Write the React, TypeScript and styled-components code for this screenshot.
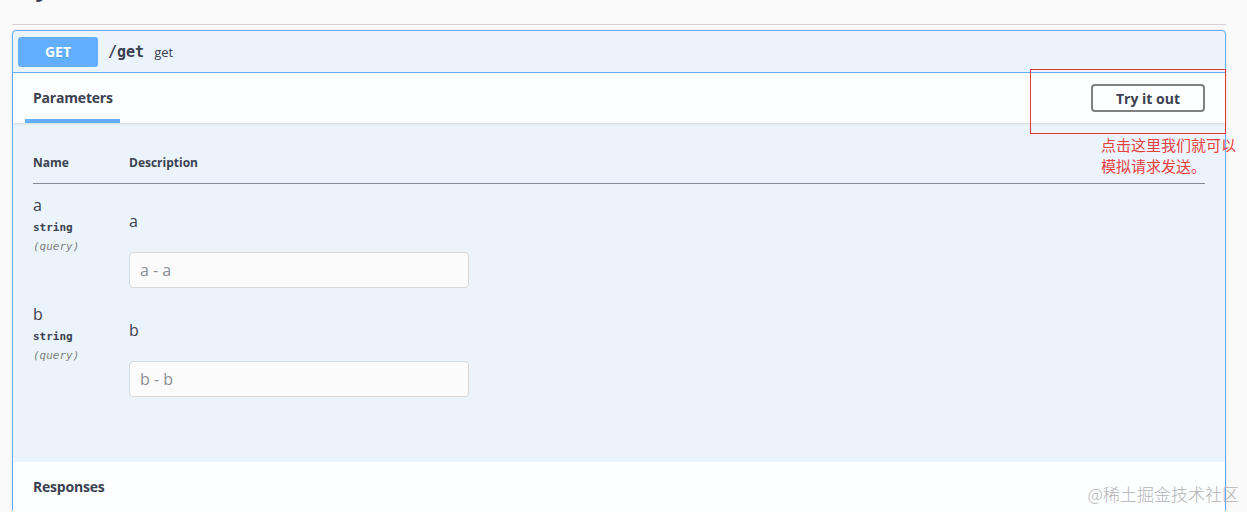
import React from "react";
import styled, { createGlobalStyle } from "styled-components";

const GlobalStyle = createGlobalStyle`
  html, body {
    margin: 0;
    padding: 0;
    background: #fafafa;
  }
  body {
    font-family: "Open Sans", "Noto Sans", "Noto Sans CJK SC", sans-serif;
    color: #3b4151;
  }
  * {
    box-sizing: border-box;
  }
`;

const Page = styled.div`
  position: relative;
  width: 1247px;
  height: 512px;
  overflow: hidden;
  padding: 0 21px 0 12px;
`;

// the tag heading is scrolled mostly out of view, only its descenders show
const TagHeader = styled.div`
  height: 25px;
  overflow: hidden;
  border-bottom: 1px solid #d9cdd6;
`;

const TagRow = styled.div`
  display: flex;
  align-items: baseline;
  gap: 16px;
  margin-top: -27px;
`;

const TagTitle = styled.h3`
  margin: 0;
  font-size: 24px;
  line-height: 28px;
  font-weight: 700;
  color: #3b4151;
`;

const TagDesc = styled.small`
  font-size: 14px;
  color: #c9cbd0;
`;

const OpBlock = styled.div`
  margin-top: 5px;
  border: 1px solid #61affe;
  border-radius: 4px;
  background: #ebf3fb;
  box-shadow: 0 0 3px rgba(0, 0, 0, 0.12);
`;

const Summary = styled.div`
  display: flex;
  align-items: center;
  height: 42px;
  padding: 5px;
  border-bottom: 1px solid #61affe;
`;

const Method = styled.span`
  width: 80px;
  height: 30px;
  display: flex;
  align-items: center;
  justify-content: center;
  border-radius: 3px;
  background: #61affe;
  color: #fff;
  font-size: 14px;
  font-weight: 700;
  text-shadow: 0 1px 0 rgba(0, 0, 0, 0.1);
`;

const Path = styled.span`
  margin-left: 10px;
  font-family: "DejaVu Sans Mono", "Liberation Mono", monospace;
  font-size: 15px;
  font-weight: 700;
  color: #3b4151;
`;

const PathDesc = styled.span`
  margin-left: 10px;
  font-size: 13px;
  color: #3b4151;
`;

const SectionHeader = styled.div`
  display: flex;
  align-items: center;
  justify-content: space-between;
  height: 50px;
  padding: 0 20px 0 12px;
  background: rgba(255, 255, 255, 0.85);
  box-shadow: 0 1px 2px rgba(0, 0, 0, 0.1);
`;

const Tab = styled.h4<{ $active?: boolean }>`
  position: relative;
  margin: 0;
  height: 50px;
  line-height: 50px;
  padding: 0 7px 0 8px;
  font-size: 14px;
  letter-spacing: -0.2px;
  font-weight: 700;
  color: #3b4151;

  &::after {
    content: "";
    display: ${(p) => (p.$active ? "block" : "none")};
    position: absolute;
    left: 0;
    right: 0;
    bottom: 0;
    height: 4px;
    background: #61affe;
  }
`;

const TryButton = styled.button`
  height: 28px;
  padding: 0 23px;
  border: 2px solid #808080;
  border-radius: 4px;
  background: transparent;
  font-family: inherit;
  font-size: 14px;
  font-weight: 700;
  color: #3b4151;
  cursor: pointer;
`;

const ParamsBody = styled.div`
  padding: 20px 20px 60px;
`;

const Table = styled.table`
  width: 100%;
  border-collapse: collapse;
`;

const Th = styled.th<{ $width?: number }>`
  width: ${(p) => (p.$width ? `${p.$width}px` : "auto")};
  padding: 12px 0;
  text-align: left;
  font-size: 12px;
  line-height: 16px;
  font-weight: 700;
  color: #3b4151;
  border-bottom: 1px solid rgba(59, 65, 81, 0.35);
`;

const Td = styled.td`
  padding: 11px 0 5px;
  vertical-align: top;
`;

const ParamName = styled.div`
  font-size: 16px;
  line-height: 20px;
`;

const ParamType = styled.div`
  padding: 5px 0 5px;
  font-family: "DejaVu Sans Mono", "Liberation Mono", monospace;
  font-size: 11px;
  line-height: 15px;
  font-weight: 700;
`;

const ParamIn = styled.div`
  font-family: "DejaVu Sans Mono", "Liberation Mono", monospace;
  font-size: 11px;
  line-height: 14px;
  font-style: italic;
  color: #808080;
`;

const ParamDesc = styled.p`
  margin: 16px 0 21px;
  font-size: 16px;
  line-height: 20px;
`;

const Input = styled.input`
  display: block;
  width: 340px;
  height: 36px;
  padding: 0 10px;
  border: 1px solid #d9d9d9;
  border-radius: 4px;
  background: #fbfbfb;
  font-family: inherit;
  font-size: 16px;
  color: #3b4151;

  &::placeholder {
    color: #8a8d94;
  }
`;

const Annotation = styled.div`
  position: absolute;
  left: 1030px;
  top: 69px;
  width: 196px;
  height: 65px;
  border: 1px solid #e4393c;
`;

const AnnotationText = styled.div`
  position: absolute;
  left: 1101px;
  top: 134px;
  font-family: "Noto Sans CJK SC", sans-serif;
  font-size: 15px;
  line-height: 21px;
  color: #e8403f;
`;

const Watermark = styled.div`
  position: absolute;
  right: 8px;
  bottom: 6px;
  font-family: "Noto Sans CJK SC", sans-serif;
  font-size: 17px;
  font-weight: 300;
  color: #b4b4b4;
`;

interface Param {
  name: string;
  type: string;
  location: string;
  description: string;
}

const params: Param[] = [
  { name: "a", type: "string", location: "(query)", description: "a" },
  { name: "b", type: "string", location: "(query)", description: "b" },
];

export default function App() {
  return (
    <>
      <GlobalStyle />
      <Page>
        <TagHeader>
          <TagRow>
            <TagTitle>my-controller</TagTitle>
            <TagDesc>My Controller</TagDesc>
          </TagRow>
        </TagHeader>

        <OpBlock>
          <Summary>
            <Method>GET</Method>
            <Path>/get</Path>
            <PathDesc>get</PathDesc>
          </Summary>

          <SectionHeader>
            <Tab $active>Parameters</Tab>
            <TryButton>Try it out</TryButton>
          </SectionHeader>

          <ParamsBody>
            <Table>
              <thead>
                <tr>
                  <Th $width={96}>Name</Th>
                  <Th>Description</Th>
                </tr>
              </thead>
              <tbody>
                {params.map((p) => (
                  <tr key={p.name}>
                    <Td>
                      <ParamName>{p.name}</ParamName>
                      <ParamType>{p.type}</ParamType>
                      <ParamIn>{p.location}</ParamIn>
                    </Td>
                    <Td>
                      <ParamDesc>{p.description}</ParamDesc>
                      <Input placeholder={`${p.name} - ${p.description}`} />
                    </Td>
                  </tr>
                ))}
              </tbody>
            </Table>
          </ParamsBody>

          <SectionHeader>
            <Tab>Responses</Tab>
          </SectionHeader>
        </OpBlock>

        <Annotation />
        <AnnotationText>
          点击这里我们就可以
          <br />
          模拟请求发送。
        </AnnotationText>
        <Watermark>@稀土掘金技术社区</Watermark>
      </Page>
    </>
  );
}
